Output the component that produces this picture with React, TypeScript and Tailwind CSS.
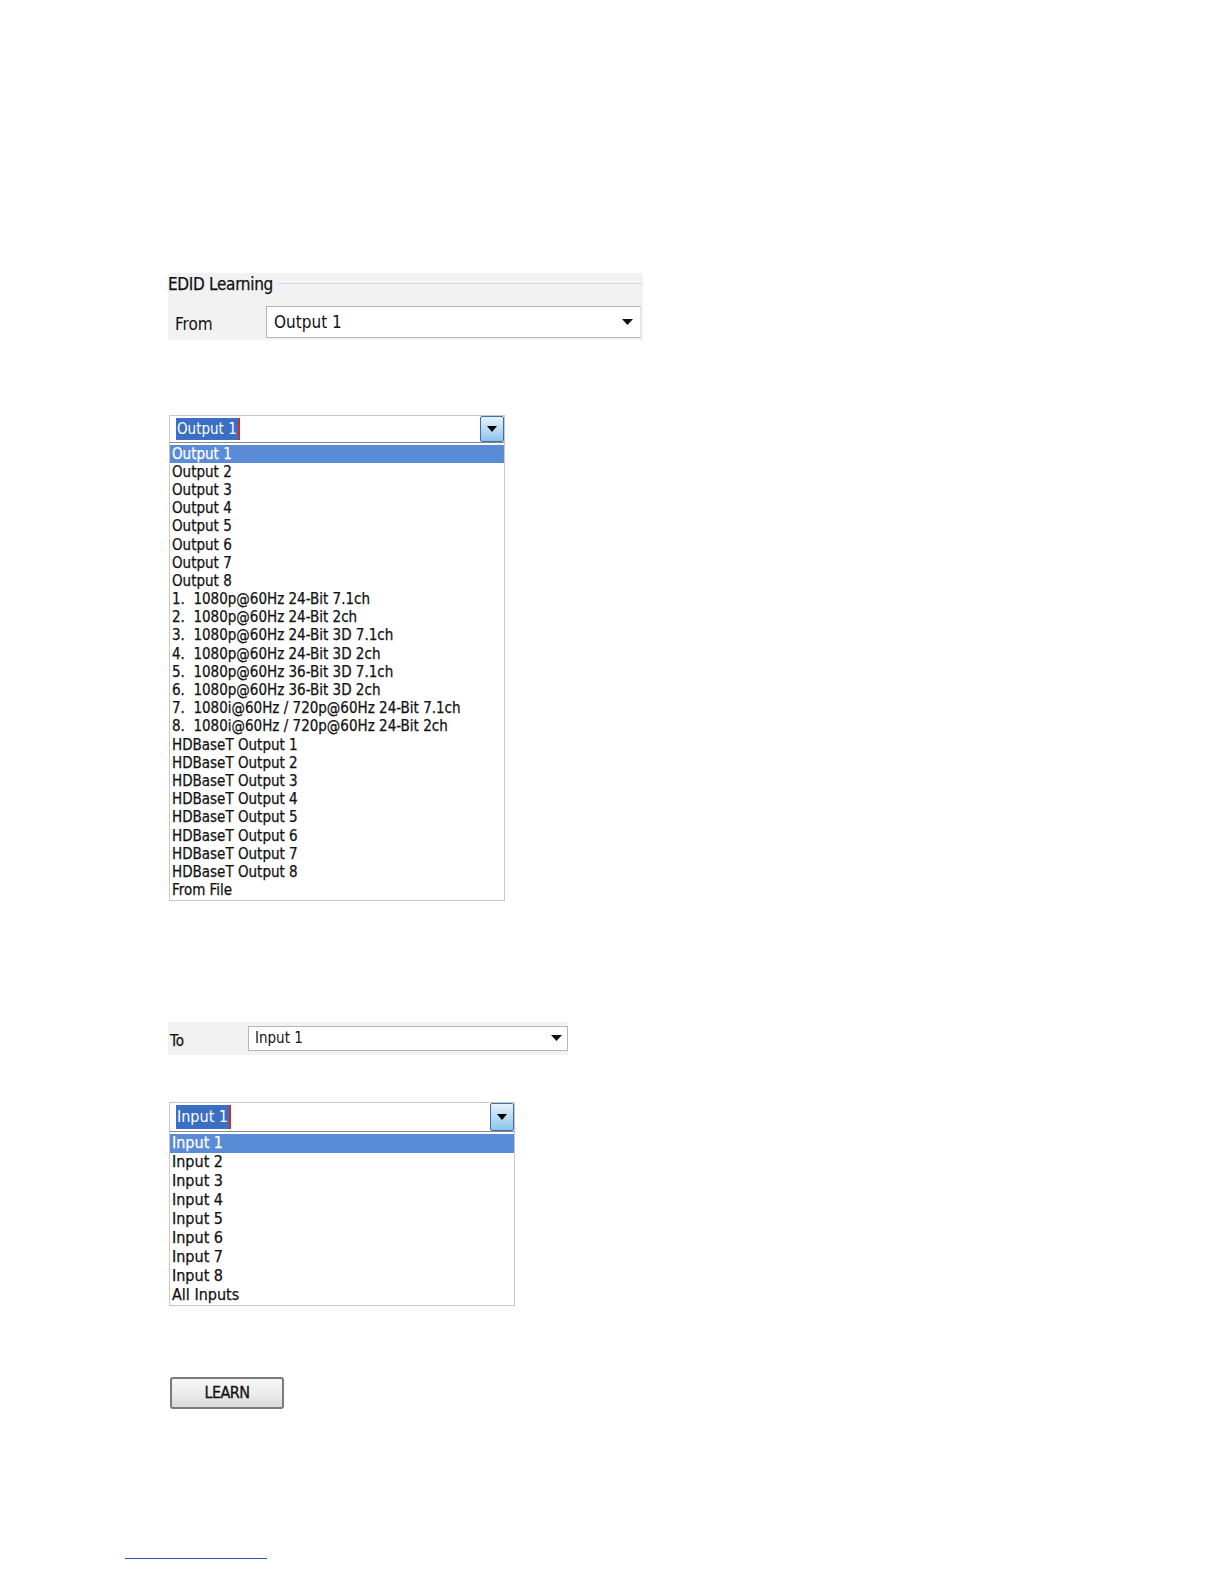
import React from "react";

const outputs = [
  "Output 1",
  "Output 2",
  "Output 3",
  "Output 4",
  "Output 5",
  "Output 6",
  "Output 7",
  "Output 8",
  "1.  1080p@60Hz 24-Bit 7.1ch",
  "2.  1080p@60Hz 24-Bit 2ch",
  "3.  1080p@60Hz 24-Bit 3D 7.1ch",
  "4.  1080p@60Hz 24-Bit 3D 2ch",
  "5.  1080p@60Hz 36-Bit 3D 7.1ch",
  "6.  1080p@60Hz 36-Bit 3D 2ch",
  "7.  1080i@60Hz / 720p@60Hz 24-Bit 7.1ch",
  "8.  1080i@60Hz / 720p@60Hz 24-Bit 2ch",
  "HDBaseT Output 1",
  "HDBaseT Output 2",
  "HDBaseT Output 3",
  "HDBaseT Output 4",
  "HDBaseT Output 5",
  "HDBaseT Output 6",
  "HDBaseT Output 7",
  "HDBaseT Output 8",
  "From File",
];

const inputs = [
  "Input 1",
  "Input 2",
  "Input 3",
  "Input 4",
  "Input 5",
  "Input 6",
  "Input 7",
  "Input 8",
  "All Inputs",
];

const font = { fontFamily: "Tahoma, 'DejaVu Sans Condensed', 'Liberation Sans', sans-serif" };

function Caret() {
  return (
    <svg width="11" height="6" viewBox="0 0 11 6">
      <path d="M0 0h11L5.5 6z" fill="#111" />
    </svg>
  );
}

function DropButton() {
  return (
    <div className="w-[24px] self-stretch flex items-center justify-center border border-[#3c6fa8] rounded-[2px] bg-gradient-to-b from-[#e6f2fc] via-[#b9dcf5] to-[#8ec3ea]">
      <svg width="10" height="6" viewBox="0 0 10 6">
        <path d="M0 0h10L5 6z" fill="#000" />
      </svg>
    </div>
  );
}

function OpenList({
  items,
  width,
  rowH,
  textSize,
  headH,
}: {
  items: string[];
  width: string;
  rowH: string;
  textSize: string;
  headH: string;
}) {
  return (
    <div className={`${width} text-[#111]`} style={font}>
      <div className={`flex items-stretch ${headH} border border-[#c8c8c8] border-b-[#8a8a8a] bg-white pl-[6px]`}>
        <div className="flex-1 flex items-center">
          <span className={`${textSize} bg-[#3b6fc6] text-white px-[1px] border-r-2 border-[#d03020]`}>
            {items[0]}
          </span>
        </div>
        <DropButton />
      </div>
      <div className="border border-[#c8c8c8] border-t-0 bg-white pt-[2px]">
        {items.map((it, i) => (
          <div
            key={it}
            className={`${rowH} ${textSize} pl-[2px] flex items-center whitespace-pre leading-none [-webkit-text-stroke:0.25px] ${
              i === 0 ? "bg-[#5a8bd6] text-white" : ""
            }`}
          >
            {it}
          </div>
        ))}
      </div>
    </div>
  );
}

export default function App() {
  return (
    <div className="w-full h-[1584px] overflow-hidden bg-white relative" style={font}>
      <div className="pl-[168px] pt-[273px]">
        {/* EDID Learning group */}
        <div className="w-[475px] h-[67px] bg-[#f2f2f2] text-[#111]">
          <div className="flex items-center h-[22px]">
            <span className="text-[17px] tracking-[-0.3px] leading-none [-webkit-text-stroke:0.25px]">EDID Learning</span>
            <div className="flex-1 ml-[4px] h-[2px] border-t border-[#d8d8d8] border-b-white" />
          </div>
          <div className="flex items-center mt-[11px] h-[32px]">
            <span className="w-[98px] pl-[7px] pt-[4px] text-[17px] leading-none">From</span>
            <div className="flex-1 mr-[2px] h-[32px] bg-white border border-[#b5b5b5] border-r-[#e0e0e0] flex items-center pl-[7px] pr-[7px]">
              <span className="flex-1 text-[17px] leading-none">Output 1</span>
              <Caret />
            </div>
          </div>
        </div>

        <div className="mt-[75px] pl-[1px]">
          <OpenList items={outputs} width="w-[336px]" rowH="h-[18.2px]" textSize="text-[15px]" headH="h-[28px]" />
        </div>

        {/* To row */}
        <div className="mt-[121px] w-[400px] h-[33px] bg-[#f2f2f2] flex items-stretch text-[#111]">
          <span className="w-[80px] pl-[2px] pt-[12px] text-[15px] leading-none [-webkit-text-stroke:0.25px]">To</span>
          <div className="flex-1 my-[4px] bg-white border border-[#b5b5b5] flex items-center pl-[6px] pr-[5px]">
            <span className="flex-1 text-[15px] leading-none">Input 1</span>
            <Caret />
          </div>
        </div>

        <div className="mt-[47px] pl-[1px]">
          <OpenList items={inputs} width="w-[346px]" rowH="h-[19px]" textSize="text-[16px]" headH="h-[30px]" />
        </div>

        <div className="mt-[71px] pl-[2px]">
          <button className="w-[114px] h-[32px] rounded-[3px] border-2 border-[#7a7a7a] bg-gradient-to-b from-[#f7f7f7] via-[#ececec] to-[#d9d9d9] text-[16px] text-[#111] leading-none tracking-[-0.5px] [-webkit-text-stroke:0.3px]">
            LEARN
          </button>
        </div>
      </div>
      <div className="absolute left-[125px] top-[1558px] w-[142px] h-[1px] bg-[#3050c0]" />
    </div>
  );
}
